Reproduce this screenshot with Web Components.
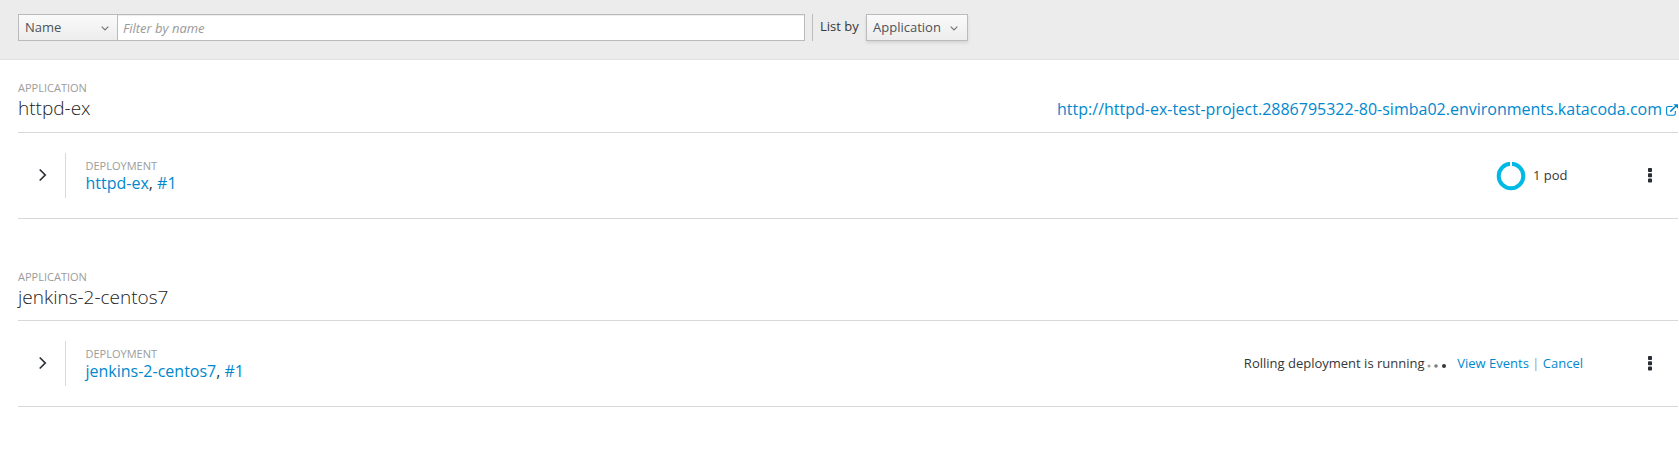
<!DOCTYPE html>
<html lang="en"><head><meta charset="utf-8"><title>Overview</title>
<style>body{margin:0;background:#fff;color:#363636;font:13px/22px "Open Sans",sans-serif;overflow:hidden}</style></head>
<body>
<overview-page></overview-page>
<script>
const define=(name,html)=>{const t=document.createElement('template');t.innerHTML=html;
customElements.define(name,class extends HTMLElement{constructor(){super();this.attachShadow({mode:'open'}).append(t.content.cloneNode(true));}});};

define('select-button',`<style>
:host{display:flex;box-sizing:border-box;height:27px;border:1px solid #bbb;background:linear-gradient(#fafafa,#ededed);color:#4d5258;padding:0 8px 0 6px;align-items:center;justify-content:space-between;line-height:23px}
svg{display:block;width:8px;height:5px;margin-top:1px}
</style><span><slot></slot></span><svg viewBox="0 0 8 5" fill="none" stroke="#72767b" stroke-width="1.2"><path d="M.7.6 4 3.9 7.3.6"/></svg>`);

define('filter-bar',`<style>
:host{display:flex;box-sizing:border-box;height:60px;padding:14px 18px 0;background:#ececec;border-bottom:1px solid #e0e0e0;align-items:flex-start}
.name{width:100px}
input{box-sizing:border-box;width:688px;height:27px;margin:0 0 0 -1px;border:1px solid #bbb;border-radius:0;background:#fff;box-shadow:inset 0 1px 1px rgba(3,3,3,.075);padding:1px 5px 0;font:italic 13px "Open Sans",sans-serif;z-index:1}
input::placeholder{color:#999;opacity:1}
.rule{width:1px;height:27px;background:#bbb;margin-left:7px}
label{margin:1px 0 0 7px;width:46px;white-space:nowrap}
.by{width:102px;padding-right:9px;box-shadow:0 2px 3px rgba(3,3,3,.1)}
</style><select-button class="name">Name</select-button><input placeholder="Filter by name"><div class="rule"></div><label>List by</label><select-button class="by">Application</select-button>`);

define('app-group',`<style>
:host{display:block;margin-left:18px;height:188px}
header{box-sizing:border-box;height:73px;padding-top:var(--heading-top,21px);border-bottom:1px solid #d8d8d8;display:flex;justify-content:space-between;width:1660px}
.kind{font-size:11px;line-height:14px;color:#9c9c9c}
h2{margin:0;font-weight:300;font-size:19px;line-height:26px;color:#222}
.route{margin-top:17px;line-height:22px;font-size:16px}
</style><header><div><div class="kind">APPLICATION</div><h2><slot name="title"></slot></h2></div><div class="route"><slot name="route"></slot></div></header><slot></slot>`);

define('route-link',`<style>
:host{display:flex;color:#0088ce;align-items:center}
a{color:inherit;text-decoration:none}
svg{width:12px;height:12px;margin:1px 0 0 4px}
</style><a><slot></slot></a><svg viewBox="0 0 12 12" fill="none" stroke="#0088ce"><path d="M6.5 2.5H2.3Q.6 2.5.6 4.2V9.5Q.6 11.2 2.3 11.2H7.6Q9.3 11.2 9.3 9.5V7" stroke-width="1.1"/><path d="M4.2 7.6 10.5 1.5" stroke-width="1.5"/><path d="M7.4.2H12V4.8Z" fill="#0088ce" stroke="none"/></svg>`);

define('deployment-row',`<style>
:host{display:flex;box-sizing:border-box;width:1660px;height:86px;border-bottom:1px solid #d8d8d8;padding:20px 25px 20px 20px;align-items:flex-start}
.chev{width:9px;height:14px;margin-top:15px}
.rule{width:1px;height:45px;background:#d8d8d8;margin-left:18px}
.info{margin-left:19.5px;flex:1}
.kind{font-size:11px;line-height:14px;color:#9c9c9c;margin-top:6px}
.name{font-size:16px;line-height:20px}
.status{margin-top:11px;display:flex}
.kebab{width:6px;height:15px;margin-top:15px;flex:none}
</style><svg class="chev" viewBox="0 0 9 14" fill="none" stroke="#292e34" stroke-width="1.7"><path d="M1.7 1.5 7.2 7 1.7 12.5"/></svg><div class="rule"></div><div class="info"><div class="kind">DEPLOYMENT</div><div class="name"><slot name="name"></slot></div></div><div class="status"><slot name="status"></slot></div><svg class="kebab" viewBox="0 0 6 15" fill="#292e34"><rect x="1" y="0" width="4" height="4" rx=".8"/><rect x="1" y="5.3" width="4" height="4" rx=".8"/><rect x="1" y="10.6" width="4" height="4" rx=".8"/></svg>`);

define('ui-link',`<style>:host{display:inline;color:#0088ce}</style><slot></slot>`);

define('pod-count',`<style>
:host{display:flex;margin-right:79.5px}
svg{width:30px;height:30px;margin:-3px 6.5px 0 0}
</style><svg viewBox="0 0 30 30" fill="none"><circle cx="15" cy="15" r="12.3" stroke="#00b9e4" stroke-width="4"/><path d="M15 0V5.5" stroke="#fff" stroke-width="2"/></svg><span><slot></slot></span>`);

define('rollout-status',`<style>
:host{display:flex;margin-right:64px;white-space:pre}
.dots{display:flex;gap:3.6px;margin:12px 11.6px 0 2px;height:4px}
i{width:4px;height:4px;border-radius:50%;background:#363636}
i:nth-child(1){opacity:.45;transform:scale(.8)}i:nth-child(2){opacity:.65;transform:scale(.9)}
.sep{color:#9c9c9c}
</style><span><slot></slot></span><div class="dots"><i></i><i></i><i></i></div><span><ui-link>View Events</ui-link><span class="sep"> | </span><ui-link>Cancel</ui-link></span>`);

define('overview-page',`<style>:host{display:block;height:454px}.second{--heading-top:22px}</style>
<filter-bar></filter-bar>
<app-group><span slot="title">httpd-ex</span><route-link slot="route">http://httpd-ex-test-project.2886795322-80-simba02.environments.katacoda.com</route-link>
<deployment-row><span slot="name"><ui-link>httpd-ex</ui-link>, <ui-link>#1</ui-link></span><pod-count slot="status">1 pod</pod-count></deployment-row></app-group>
<app-group class="second"><span slot="title">jenkins-2-centos7</span>
<deployment-row><span slot="name"><ui-link>jenkins-2-centos7</ui-link>, <ui-link>#1</ui-link></span><rollout-status slot="status">Rolling deployment is running</rollout-status></deployment-row></app-group>`);
</script></body></html>
